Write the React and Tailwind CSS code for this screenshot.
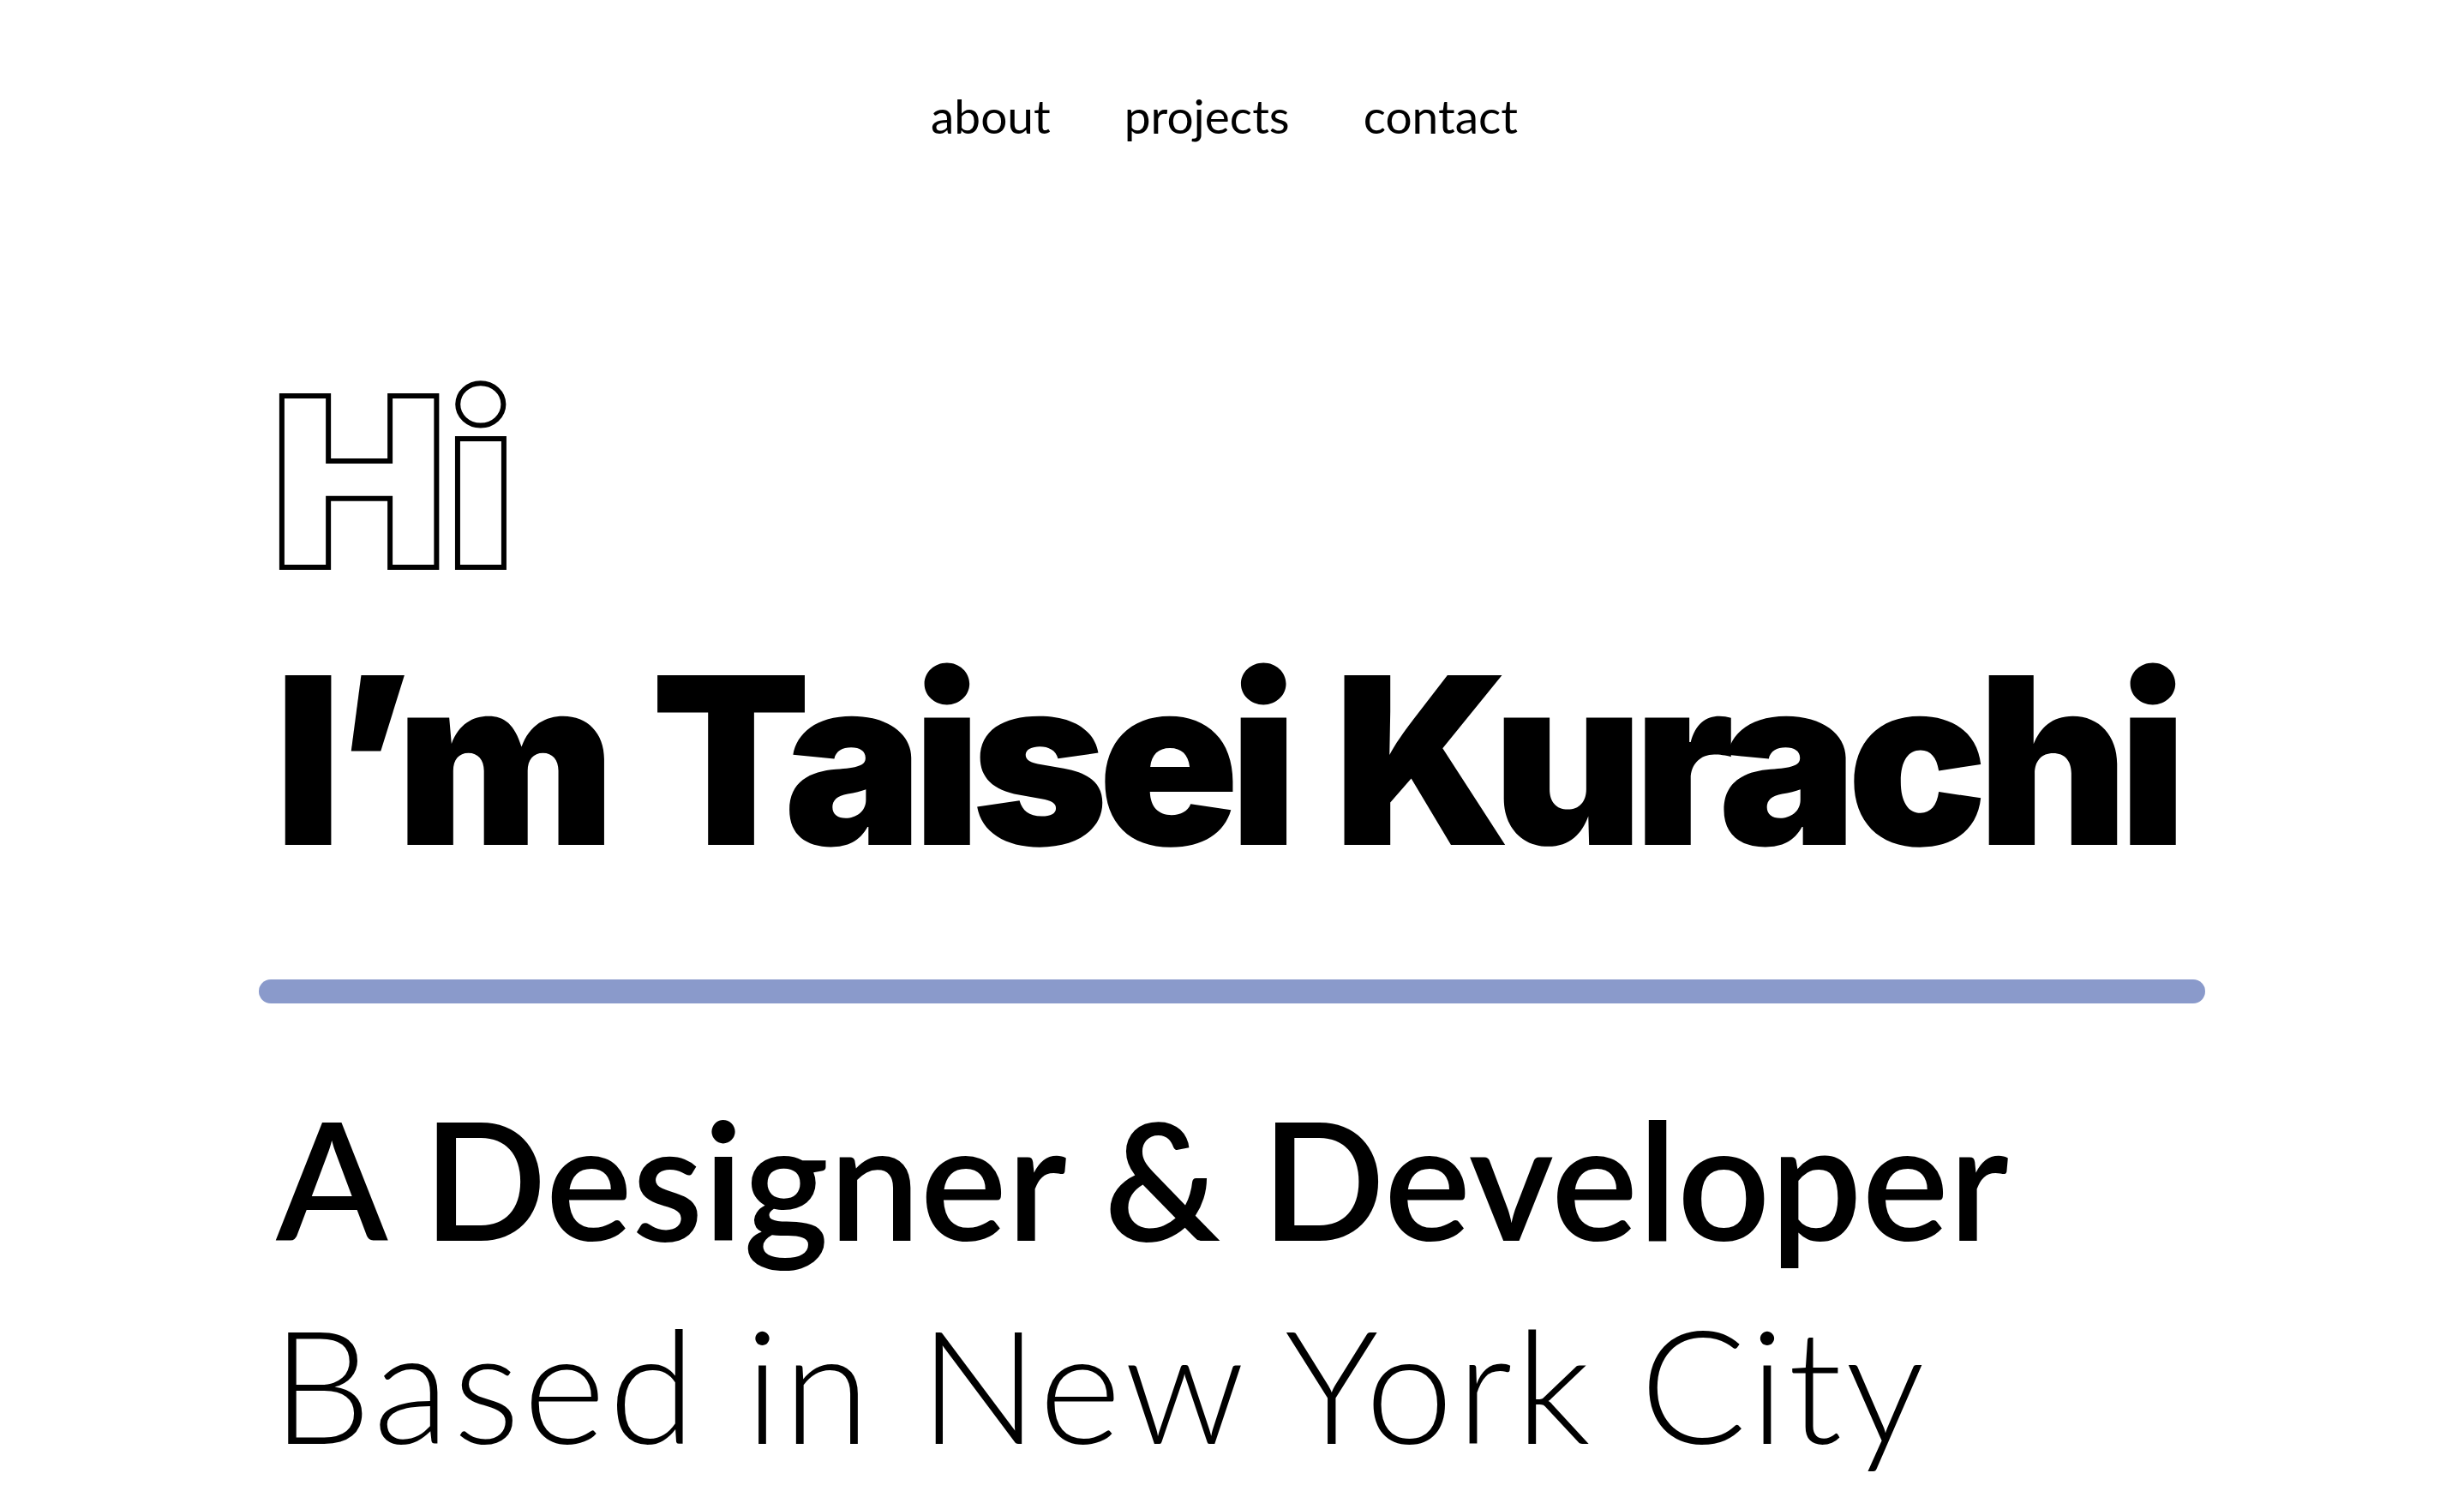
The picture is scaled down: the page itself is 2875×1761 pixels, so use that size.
import React from "react";

const navLinks = ["about", "projects", "contact"];

const App = () => {
  return (
    <div className="min-h-screen bg-white text-black font-['Lato',_'Inter',_sans-serif]">
      {/* Top nav */}
      <header className="pt-[108px] pr-[18px] flex justify-center">
        <nav className="flex gap-[86px] text-[55px] leading-none font-normal">
          {navLinks.map((link) => (
            <a key={link} href={`#${link}`} className="text-black">
              {link}
            </a>
          ))}
        </nav>
      </header>

      {/* Hero */}
      <main className="px-[302px]">
        <div className="px-[22px] pt-[262px]">
          <h2 className="-ml-[8px] font-['Inter',_sans-serif] text-[275px] leading-none font-black tracking-[-2px] text-transparent [-webkit-text-stroke:6px_#000]">
            Hi
          </h2>
          <h1 className="-ml-[4px] mt-[51px] font-['Inter',_sans-serif] text-[272px] leading-none font-black tracking-[-12px] [word-spacing:11px] whitespace-nowrap">
            I’m Taisei Kurachi
          </h1>
        </div>

        <div className="mt-[120px] h-[28px] w-full rounded-full bg-[#8a9acb]" />

        <div className="px-[20px]">
          <p className="mt-[108px] text-[190px] leading-none font-semibold whitespace-nowrap">
            A Designer &amp; Developer
          </p>
          <p className="-ml-[5px] mt-[53px] text-[184px] leading-none font-light tracking-[3.8px] whitespace-nowrap">
            Based in New York City
          </p>
        </div>
      </main>
    </div>
  );
};

export default App;
